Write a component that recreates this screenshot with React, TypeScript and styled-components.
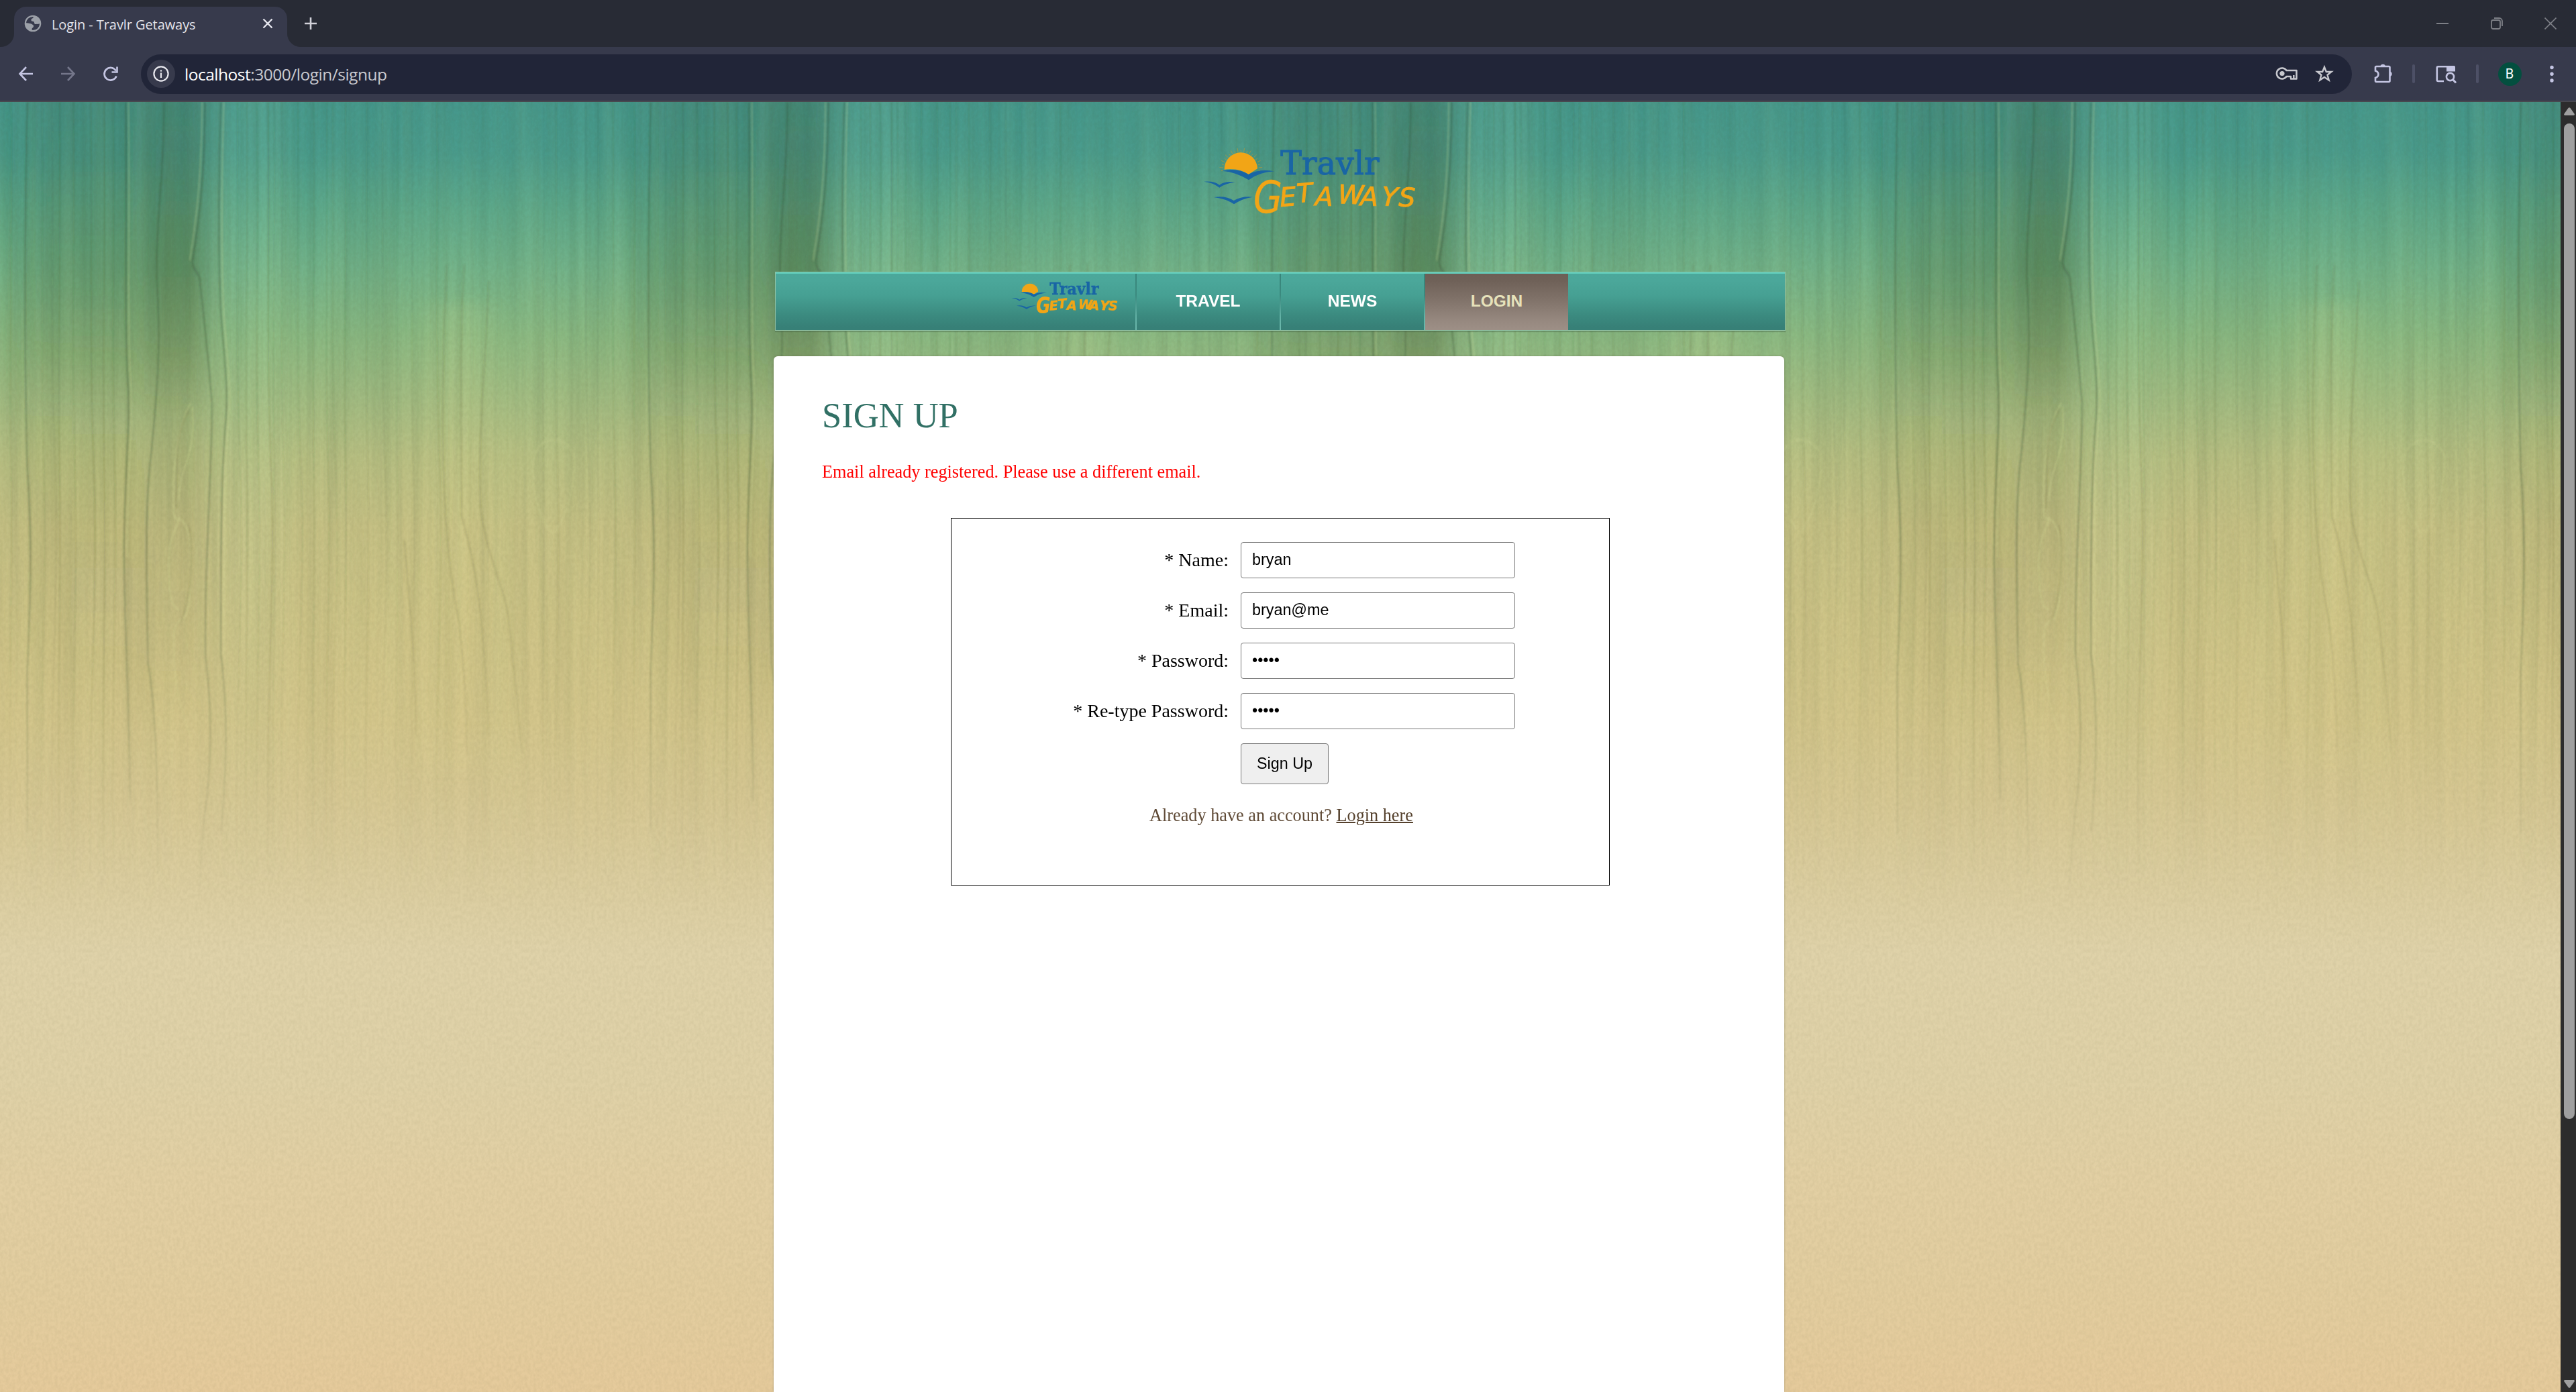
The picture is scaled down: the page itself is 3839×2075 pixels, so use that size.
import React from "react";
import styled, { createGlobalStyle } from "styled-components";

const Global = createGlobalStyle`
  html, body { margin: 0; padding: 0; background: #dccea3; overflow: hidden; }
  * { box-sizing: border-box; }
`;

const ui = `"Open Sans", "Noto Sans", sans-serif`;
const serif = `"Liberation Serif", "Times New Roman", serif`;
const sans = `"Liberation Sans", Arial, sans-serif`;

const Window = styled.div`
  width: 3839px;
  height: 2075px;
  display: flex;
  flex-direction: column;
  overflow: hidden;
`;

/* ---------- browser chrome ---------- */

const TabStrip = styled.div`
  height: 70px;
  background: #282b35;
  display: flex;
  align-items: flex-end;
  padding-left: 21px;
`;

const Tab = styled.div`
  position: relative;
  width: 407px;
  height: 60px;
  background: #373a4c;
  border-radius: 18px 18px 0 0;
  display: flex;
  align-items: center;
  padding: 0 20px 10px 15px;
  &::before,
  &::after {
    content: "";
    position: absolute;
    bottom: 0;
    width: 20px;
    height: 20px;
  }
  &::before {
    left: -20px;
    background: radial-gradient(circle at 0 0, transparent 19.5px, #373a4c 20.5px);
  }
  &::after {
    right: -20px;
    background: radial-gradient(circle at 100% 0, transparent 19.5px, #373a4c 20.5px);
  }
`;

const TabTitle = styled.span`
  flex: 1;
  margin-left: 15px;
  padding-top: 3px;
  font: 20px/28px ${ui};
  letter-spacing: -0.08px;
  color: #e3e3ea;
  white-space: nowrap;
`;

const NewTab = styled.div`
  width: 32px;
  height: 70px;
  margin-left: 19px;
  display: flex;
  align-items: center;
  justify-content: center;
`;

const WindowControls = styled.div`
  height: 70px;
  margin-left: auto;
  padding-right: 29px;
  display: flex;
  align-items: center;
  gap: 62.5px;
`;

const Toolbar = styled.div`
  height: 82px;
  background: #373a4c;
  border-bottom: 2px solid #48484f;
  display: flex;
  align-items: center;
  padding: 0 21px 0 23px;
`;

const NavButtons = styled.div`
  display: flex;
  gap: 31px;
  width: 187px;
`;

const Omnibox = styled.div`
  width: 3295px;
  height: 59px;
  border-radius: 30px;
  background: #212538;
  display: flex;
  align-items: center;
  padding: 0 27px 0 9px;
`;

const SiteInfo = styled.div`
  width: 42px;
  height: 42px;
  border-radius: 50%;
  background: #373a4c;
  display: flex;
  align-items: center;
  justify-content: center;
`;

const Url = styled.div`
  flex: 1;
  margin-left: 14px;
  padding-top: 2px;
  font: 24.5px/34px ${ui};
  letter-spacing: -0.49px;
  color: #c7c8ce;
`;

const UrlHost = styled.span`
  color: #ffffff;
`;

const OmniActions = styled.div`
  display: flex;
  align-items: center;
  gap: 25px;
`;

const ToolActions = styled.div`
  flex: 1;
  display: flex;
  align-items: center;
  justify-content: space-between;
  padding-left: 30px;
`;

const Separator = styled.div`
  width: 4px;
  height: 28px;
  border-radius: 2px;
  background: #4d5066;
`;

const Avatar = styled.div`
  width: 35px;
  height: 35px;
  margin-right: 2px;
  border-radius: 50%;
  background: #034f3f;
  color: #fff;
  display: flex;
  align-items: center;
  justify-content: center;
  font: 20px/35px Roboto, sans-serif;
`;

/* ---------- viewport ---------- */

const Viewport = styled.div`
  flex: 1;
  display: flex;
  min-height: 0;
`;

const Page = styled.div`
  position: relative;
  flex: 1;
  overflow: hidden;
  display: flex;
  flex-direction: column;
  align-items: center;
`;

const Backdrop = styled.svg`
  position: absolute;
  inset: 0;
  display: block;
`;

const Scrollbar = styled.div`
  width: 23px;
  background: #2c2c2c;
  display: flex;
  flex-direction: column;
  align-items: center;
  padding: 8px 0 6px 3px;
`;

const Thumb = styled.div`
  width: 16px;
  height: 1484px;
  margin: 12px 0 auto;
  border-radius: 8px;
  background: #9f9f9f;
`;

const Header = styled.header`
  position: relative;
  width: 1506px;
  height: 253px;
  padding: 64px 0 0 638px;
`;

const Menu = styled.nav`
  position: relative;
  width: 1506px;
  height: 88px;
  padding-right: 2px;
  border: 1px solid rgba(170, 205, 170, 0.75);
  border-top-color: rgba(150, 210, 180, 0.8);
  box-shadow: 0 2px 1px rgba(60, 90, 60, 0.35);
  background: linear-gradient(#4ba89b 0%, #4ba79a 15%, #46a093 40%, #3b8a7f 75%, #378077 95%);
  display: flex;
  justify-content: center;
  &::before {
    content: "";
    position: absolute;
    left: 0;
    right: 0;
    top: 0;
    height: 2px;
    background: #62cfbd;
  }
`;

const MenuItem = styled.a<{ $active?: boolean; $first?: boolean }>`
  position: relative;
  width: 215px;
  height: 86px;
  display: flex;
  align-items: center;
  justify-content: center;
  font: bold 24.5px/28px ${sans};
  color: ${(p) => (p.$active ? "#e6e2bb" : "#ffffff")};
  border-left: ${(p) => (p.$first ? 0 : 2)}px solid;
  border-image: linear-gradient(#64cdbc 3%, #38857a 4%, #3b8a7f 40%, #62b1a5 75%, #6db9ad) 1;
  background: ${(p) =>
    p.$active ? "linear-gradient(#6c5e55 0%, #6f6158 15%, #82746b 50%, #978980 85%, #9d8f86 100%) padding-box" : "none"};
  ${(p) => (p.$active ? "clip-path: inset(2px 0 0 0);" : "")}
`;

const MenuLogo = styled(MenuItem)`
  align-items: flex-start;
  justify-content: flex-start;
  padding: 11px 0 0 30px;
`;

const Panel = styled.main`
  position: relative;
  width: 1506px;
  flex: 1;
  margin: 38px 4px 0 0;
  padding: 55px 0 0 72px;
  border-radius: 6px 6px 0 0;
  background: #fff;
  box-shadow: 0 0 3px rgba(90, 90, 60, 0.45);
`;

const Title = styled.h1`
  margin: 0;
  font: normal 52.5px/66px ${serif};
  color: #317065;
`;

const ErrorText = styled.p`
  margin: 36px 0 0;
  font: 26.25px/32px ${serif};
  color: #ff0000;
`;

const FormBox = styled.form`
  width: 982px;
  height: 548px;
  margin: 52px 0 0 192px;
  padding-top: 35px;
  border: 1px solid #000;
`;

const Fields = styled.div`
  display: grid;
  grid-template-columns: 414px 409px;
  grid-auto-rows: 54px;
  column-gap: 17px;
  row-gap: 21px;
`;

const Label = styled.label`
  display: flex;
  align-items: center;
  justify-content: flex-end;
  padding: 0 1px 2px 0;
  font: 28px/31px ${serif};
  color: #000;
`;

const Input = styled.input`
  width: 409px;
  height: 54px;
  margin: 0;
  padding: 0 16px 2px;
  border: 1px solid #767676;
  border-radius: 4px;
  background: #fff;
  font: 23.33px/27px ${sans};
  color: #000;
  outline: none;
`;

const Submit = styled.button`
  grid-column: 2;
  width: 131px;
  height: 61px;
  padding: 0;
  border: 1px solid #767676;
  border-radius: 4px;
  background: #efefef;
  font: 23.33px/27px ${sans};
  color: #000;
`;

const Hint = styled.p`
  margin: 38px 0 0 3px;
  text-align: center;
  font: 26.25px/31px ${serif};
  color: #5f4a36;
`;

const HintLink = styled.a`
  color: #54402c;
  text-decoration: underline;
  text-decoration-thickness: 2px;
`;

const LogoSvg = styled.svg`
  display: block;
  overflow: visible;
`;

/* ---------- drawings ---------- */

function Logo({ width }: { width: number }) {
  return (
    <LogoSvg width={width} height={(width * 320) / 960} viewBox="40 50 960 320">
      <g stroke="#c79a2b" strokeWidth="3" opacity="0.6">
        {Array.from({ length: 21 }, (_, i) => {
          const a = Math.PI * (-0.02 + (i / 20) * 1.04);
          const c = Math.cos(a);
          const s = Math.sin(a);
          const o = i % 2 ? 96 : 88;
          return <line key={i} x1={209 - 79 * c} y1={160 - 79 * s} x2={209 - o * c} y2={160 - o * s} />;
        })}
      </g>
      <path d="M135 160A74 74 0 0 1 283 156L243 182Q200 152 135 160Z" fill="#f2a516" />
      <g fill="#1965a5">
        <path d="M125 166Q195 150 243 182Q290 156 358 168Q290 172 244 207Q190 172 125 166Z" />
        <path d="M44 214Q90 210 113 229Q140 210 182 217Q140 221 113 241Q85 219 44 214Z" />
        <path d="M88 284Q140 275 177 299Q215 277 262 283Q215 290 178 315Q140 290 88 284Z" />
        <text
          x="386"
          y="182"
          fontFamily="'DejaVu Serif', serif"
          fontSize="148"
          textLength="442"
          lengthAdjust="spacingAndGlyphs"
          stroke="#1965a5"
          strokeWidth="3"
        >
          Travlr
        </text>
      </g>
      <g fill="#f2a516" stroke="#f2a516" fontFamily="'DejaVu Sans', sans-serif" fontStyle="italic">
        <text x="264" y="352" fontSize="200" strokeWidth="1" textLength="130" lengthAdjust="spacingAndGlyphs">
          G
        </text>
        <text
          x="386 462 540 642 742 836 914"
          y="326 308 320 311 320 320 324"
          rotate="-5 -5 2 2 2 4 2"
          fontSize="116"
          strokeWidth="3"
        >
          ETAWAYS
        </text>
      </g>
    </LogoSvg>
  );
}

const TILE = 929;

const grain: Array<[number, number, number]> = [
  [22, 0.1, 3], [85, 0.1, 2], [105, 0.08, 2], [120, 0.14, 3], [148, 0.12, 2], [183, 0.14, 3], [210, 0.16, 3],
  [228, 0.1, 3], [478, 0.12, 2], [497, 0.16, 2], [518, 0.14, 2], [540, 0.16, 3], [552, 0.12, 2], [568, 0.1, 2],
  [600, 0.1, 2], [632, 0.14, 2], [658, 0.14, 2], [670, 0.1, 2], [696, 0.14, 2], [738, 0.08, 3], [770, 0.08, 2],
  [800, 0.06, 3], [830, 0.08, 2], [880, 0.1, 3], [1095, 0.08, 2], [1120, 0.08, 3], [1180, 0.08, 2], [1205, 0.08, 2],
  [1235, 0.1, 3],
];

function WoodBackdrop() {
  return (
    <Backdrop width="3816" height="1923" viewBox="0 0 3816 1923">
      <defs>
        <linearGradient id="sea" x1="0" y1="0" x2="0" y2="1">
          {[
            [0, "#45988d"], [0.04, "#4a9c8d"], [0.085, "#5ea98b"], [0.13, "#73b38a"], [0.18, "#8ab983"],
            [0.225, "#a0bc83"], [0.275, "#b9c084"], [0.33, "#c8c286"], [0.41, "#cfc488"], [0.48, "#d4c68c"],
            [0.54, "#d7c894"], [0.6, "#dbcd9f"], [0.66, "#dfd2a9"], [0.76, "#dfd1a7"], [0.84, "#e2cfa3"],
            [0.92, "#e2cd9f"], [1, "#e5ca9b"],
          ].map(([o, c]) => (
            <stop key={String(o)} offset={o} stopColor={String(c)} />
          ))}
        </linearGradient>
        <linearGradient id="fade" x1="0" y1="0" x2="0" y2="1">
          <stop offset="0" stopColor="#fff" />
          <stop offset="0.34" stopColor="#fff" />
          <stop offset="0.48" stopColor="#888" />
          <stop offset="0.63" stopColor="#000" />
        </linearGradient>
        <linearGradient id="shade" x1="0" y1="0" x2="0" y2="1">
          <stop offset="0" stopColor="#3d5a40" stopOpacity="0.14" />
          <stop offset="0.2" stopColor="#3d5a30" stopOpacity="0.27" />
          <stop offset="0.28" stopColor="#4a5a30" stopOpacity="0.2" />
          <stop offset="0.36" stopColor="#5a5a30" stopOpacity="0.07" />
          <stop offset="0.6" stopColor="#5a5a30" stopOpacity="0.05" />
          <stop offset="0.7" stopColor="#5a5a30" stopOpacity="0" />
        </linearGradient>
        <mask id="woodMask" maskUnits="userSpaceOnUse" x="0" y="0" width="3816" height="1923">
          <rect width="3816" height="1923" fill="url(#fade)" />
        </mask>
        <filter id="streaks" x="0" y="0" width="1" height="1" colorInterpolationFilters="sRGB">
          <feTurbulence type="fractalNoise" baseFrequency="0.07 0.0016" numOctaves="3" seed="8" stitchTiles="stitch" />
          <feColorMatrix values="0 0 0 0 0.2  0 0 0 0 0.28  0 0 0 0 0.15  1.7 0 0 0 -0.6" />
        </filter>
        <filter id="lights" x="0" y="0" width="1" height="1" colorInterpolationFilters="sRGB">
          <feTurbulence type="fractalNoise" baseFrequency="0.03 0.0012" numOctaves="2" seed="21" stitchTiles="stitch" />
          <feColorMatrix values="0 0 0 0 0.9  0 0 0 0 1  0 0 0 0 0.7  1.6 0 0 0 -0.6" />
        </filter>
        <filter id="speckle" x="0" y="0" width="1" height="1" colorInterpolationFilters="sRGB">
          <feTurbulence type="fractalNoise" baseFrequency="0.22 0.16" numOctaves="2" seed="4" />
          <feColorMatrix values="0 0 0 0 0.3  0 0 0 0 0.3  0 0 0 0 0.15  1 0 0 0 -0.35" />
        </filter>
        <filter id="soft" x="-30%" width="160%" y="-5%" height="110%">
          <feGaussianBlur stdDeviation="26 10" />
        </filter>
        <filter id="edge">
          <feGaussianBlur stdDeviation="1.4" />
        </filter>
        <g id="tile">
          <g filter="url(#soft)">
            <rect x="36" y="-30" width="284" height="1400" fill="url(#shade)" />
            <rect x="215" y="-30" width="90" height="1400" fill="url(#shade)" />
            <rect x="330" y="-30" width="90" height="1200" fill="#baf0c0" opacity="0.1" />
            <rect x="640" y="300" width="90" height="700" fill="#fff0a0" opacity="0.1" />
          </g>
          <rect width={TILE} height="1300" filter="url(#streaks)" opacity="0.12" />
          <rect width={TILE} height="1300" filter="url(#lights)" opacity="0.09" />
          <g transform="scale(0.7398 1.2117)" fill="none" filter="url(#edge)">
            {grain.map(([x, o, w], i) => (
              <path
                key={x}
                d={`M${x} 0C${x + 3} 180 ${x - 4} 300 ${x + (i % 3) * 3} 450S${x - 5} 700 ${x} 950`}
                stroke="#3a4420"
                strokeOpacity={o}
                strokeWidth={w}
              />
            ))}
            <g stroke="#34452a" strokeWidth="4" strokeOpacity="0.25">
              <path d="M55 0C50 150 48 300 55 450C65 540 62 600 55 700V900" />
              <path d="M253 0C256 150 250 260 257 340C264 400 250 450 250 560C252 680 262 760 262 860" />
              <path d="M330 0C332 80 312 160 316 220C325 300 316 360 305 430C290 500 296 600 298 690C310 730 318 800 318 950" />
              <path d="M413 0C412 100 400 150 388 195C385 207 405 210 403 222C412 270 420 320 427 370C428 440 412 560 414 680C425 740 430 800 412 880C405 920 403 960 400 970" />
              <path d="M445 0C440 100 440 200 445 260C452 320 460 350 455 390C445 460 445 560 445 680C456 730 460 800 445 900" />
            </g>
            <g stroke="#dfe6a0" strokeWidth="3" strokeOpacity="0.24">
              <path d="M259 0C262 150 256 260 263 340C270 400 256 450 256 560" />
              <path d="M407 0C406 100 394 150 382 195" />
              <path d="M451 0C446 100 446 200 451 260C458 320 466 350 461 390C451 460 451 560 451 680" />
              <path d="M385 370C360 395 345 450 350 505C352 520 366 508 372 520C385 535 385 545 385 570C384 610 382 620 372 635C350 640 350 650 350 670C350 720 370 760 387 785" />
              <path d="M388 375C395 440 362 445 360 490M362 510C350 535 340 535 340 570C340 620 350 620 360 625" />
              <path d="M1075 440C1085 405 1150 410 1158 440C1158 480 1130 530 1110 530C1090 510 1070 490 1075 440Z" strokeOpacity="0.14" />
            </g>
            <g stroke="#5c5a2c" strokeWidth="4" strokeOpacity="0.15">
              <path d="M382 378C350 410 358 440 354 500M380 520C392 560 384 610 364 640" />
              <path d="M985 220C975 350 962 420 968 500C980 560 1020 600 1025 640C1035 700 1045 740 1050 800" />
              <path d="M935 200C925 300 930 400 930 510C960 570 975 640 985 780" />
              <path d="M900 200C885 400 890 540 925 640C935 700 940 740 940 800" />
              <path d="M815 540C820 600 835 640 838 780" />
            </g>
          </g>
        </g>
      </defs>
      <rect width="3816" height="1923" fill="url(#sea)" />
      <g mask="url(#woodMask)">
        {[0, 1, 2, 3, 4].map((n) => (
          <use key={n} href="#tile" x={n * TILE} />
        ))}
      </g>
      <rect width="3816" height="1923" filter="url(#speckle)" opacity="0.11" />
    </Backdrop>
  );
}

const lilac = "#c4c5e2";

const icon = (size: number, children: React.ReactNode, color = lilac, width = 2.6, h = size) => (
  <svg width={size} height={h} viewBox={`0 0 ${size} ${h}`} fill="none" stroke={color} strokeWidth={width}>
    {children}
  </svg>
);

const fields = [
  { id: "name", label: "* Name:", value: "bryan", type: "text" },
  { id: "email", label: "* Email:", value: "bryan@me", type: "text" },
  { id: "password", label: "* Password:", value: "bryan", type: "password" },
  { id: "retype", label: "* Re-type Password:", value: "bryan", type: "password" },
];

export default function App() {
  return (
    <Window>
      <Global />
      <TabStrip>
        <Tab>
          {icon(
            26,
            <>
              <circle cx="13" cy="13" r="11.2" strokeWidth="2.2" />
              <g fill="#9ca0a8" stroke="none">
                <path d="M15 1.500C13 3 14.500 4.500 12.500 5.200C10.500 6 9.800 7.500 11 9.200C12 10.500 13.500 9.500 14.500 10.500C15.500 11.500 14.500 13 16 13.800C17.500 14.500 18.500 13 20 14L24.500 13C24.500 7 20.500 2 15 1.500Z" />
                <path d="M1.500 12C4 12.500 8.500 12.500 10.500 13.500C13 14.800 14.500 15.500 14 17.500C13.500 19.500 11.500 19.500 11.500 21.500C11.500 23 12.500 23.500 12 24.500C6 24 1.500 19 1.500 12Z" />
              </g>
            </>,
            "#9ca0a8",
          )}
          <TabTitle>Login - Travlr Getaways</TabTitle>
          {icon(18, <path d="M2.500 2.500L15.500 15.500M15.500 2.500L2.500 15.500" />, "#e6e6ee", 2.4)}
        </Tab>
        <NewTab>{icon(20, <path d="M10 1V19M1 10H19" />, "#d2d2da", 2.6)}</NewTab>
        <WindowControls>
          {icon(18, <path d="M0 9H18" />, "#7d7f86", 2)}
          {icon(
            18,
            <>
              <rect x="1" y="4" width="13" height="13" rx="2.5" />
              <path d="M5 1H12.500A4.500 4.500 0 0 1 17 5.500V13" />
            </>,
            "#7d7f86",
            1.8,
          )}
          {icon(18, <path d="M0.500 0.500L17.500 17.500M17.500 0.500L0.500 17.500" />, "#7d7f86", 1.6)}
        </WindowControls>
      </TabStrip>

      <Toolbar>
        <NavButtons>
          {icon(32, <path d="M26 16H7M16 6L6.500 16L16 26" />)}
          {icon(32, <path d="M5 16H24M15 6L24.500 16L15 26" />, "#74768a")}
          {icon(32, <><path d="M24.500 19.500A9.300 9.300 0 1 1 23.800 11.500" /><path d="M25.500 5.500V13.500H17.500" /></>)}
        </NavButtons>
        <Omnibox>
          <SiteInfo>
            {icon(
              26,
              <>
                <circle cx="13" cy="13" r="10.6" strokeWidth="2.2" />
                <path d="M13 11.500V19" strokeWidth="2.2" />
                <path d="M13 7.300V9.600" strokeWidth="2.2" />
              </>,
              "#e8e8ee",
            )}
          </SiteInfo>
          <Url>
            <UrlHost>localhost</UrlHost>:3000/login/signup
          </Url>
          <OmniActions>
            {icon(
              34,
              <>
                <path d="M16.500 8.500A8 8 0 1 0 16.500 17.500H23V21H31.500V8.500Z" strokeLinejoin="round" transform="translate(0 -0.5)" />
                <circle cx="10" cy="12.500" r="3.600" fill="#c7c8ce" stroke="none" />
                <path d="M27.300 20V15" />
              </>,
              "#c7c8ce",
              2.5,
              26,
            )}
            {icon(
              28,
              <path d="M14 4L16.800 11H24.500L18.500 15.800L20.700 23.500L14 19L7.300 23.500L9.500 15.800L3.500 11H11.200Z" />,
              "#c7c8ce",
              2.4,
            )}
          </OmniActions>
        </Omnibox>
        <ToolActions>
          {icon(
            32,
            <>
              <path d="M5 6.500Q5 5 6.500 5H25Q26.500 5 26.500 6.500V26.500Q26.500 28 25 28H6.500Q5 28 5 26.500V22C8 21 9.500 19.500 9.500 16.700C9.500 14 8 12.500 5 11.500Z" />
              <path d="M12.500 5A3.800 3.800 0 0 1 20 5ZM26.500 12.500A3.800 3.800 0 0 1 26.500 20Z" fill={lilac} stroke="none" />
            </>,
          )}
          <Separator />
          {icon(
            34,
            <>
              <path d="M14 28H5.500Q3.800 28 3.800 26.300V8Q3.800 6.300 5.500 6.300H30" />
              <path d="M18 5H29Q31 5 31 7V13.500H18Z" fill={lilac} stroke="none" />
              <circle cx="23.500" cy="21.500" r="5.600" />
              <path d="M27.500 25.500L32 30.500" strokeWidth="3" />
            </>,
          )}
          <Separator />
          <Avatar>B</Avatar>
          {icon(
            30,
            <g fill={lilac} stroke="none">
              <circle cx="15" cy="5.500" r="2.700" />
              <circle cx="15" cy="15.200" r="2.700" />
              <circle cx="15" cy="25" r="2.700" />
            </g>,
          )}
        </ToolActions>
      </Toolbar>

      <Viewport>
        <Page>
          <WoodBackdrop />
          <Header>
            <Logo width={320} />
          </Header>
          <Menu>
            <MenuLogo $first>
              <Logo width={159} />
            </MenuLogo>
            <MenuItem>TRAVEL</MenuItem>
            <MenuItem>NEWS</MenuItem>
            <MenuItem $active>LOGIN</MenuItem>
          </Menu>
          <Panel>
            <Title>SIGN UP</Title>
            <ErrorText>Email already registered. Please use a different email.</ErrorText>
            <FormBox>
              <Fields>
                {fields.map((f) => (
                  <React.Fragment key={f.id}>
                    <Label htmlFor={f.id}>{f.label}</Label>
                    <Input id={f.id} type={f.type} defaultValue={f.value} />
                  </React.Fragment>
                ))}
                <Submit type="button">Sign Up</Submit>
              </Fields>
              <Hint>
                Already have an account? <HintLink>Login here</HintLink>
              </Hint>
            </FormBox>
          </Panel>
        </Page>
        <Scrollbar>
          <svg width="16" height="12" viewBox="0 0 16 12">
            <path d="M1 12Q-0.500 11 0.500 9.500L6.500 1Q8 -0.700 9.500 1L15.500 9.500Q16.500 11 15 12Z" fill="#9f9f9f" />
          </svg>
          <Thumb />
          <svg width="16" height="12" viewBox="0 0 16 12">
            <path d="M1 0Q-0.500 1 0.500 2.500L6.500 11Q8 12.700 9.500 11L15.500 2.500Q16.500 1 15 0Z" fill="#9f9f9f" />
          </svg>
        </Scrollbar>
      </Viewport>
    </Window>
  );
}
